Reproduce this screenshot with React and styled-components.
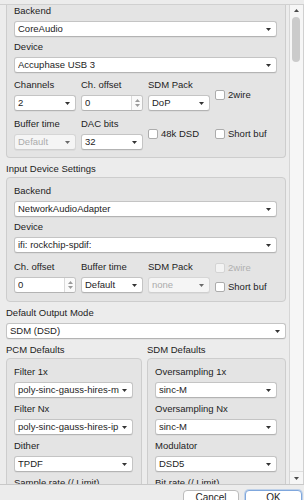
import React from 'react'
import styled, { createGlobalStyle } from 'styled-components'

const GlobalStyle = createGlobalStyle`
  html, body {
    margin: 0;
    padding: 0;
  }
  body {
    background: #ececec;
    font-family: "Liberation Sans", Arial, sans-serif;
    font-size: 9.5px;
    color: #1d1d1d;
    overflow: hidden;
  }
`

function Caret({ muted }) {
  return (
    <svg width="5" height="3" viewBox="0 0 5 3">
      <path d="M0 0h5L2.5 3z" fill={muted ? '#6a6a6a' : '#333'} />
    </svg>
  )
}

function Combo({ value, disabled }) {
  return (
    <ComboBox $disabled={disabled}>
      <ComboText>{value}</ComboText>
      <Caret muted={disabled} />
    </ComboBox>
  )
}

function Spin({ value }) {
  return (
    <SpinBox>
      <ComboText>{value}</ComboText>
      <Stepper>
        <svg width="5" height="3" viewBox="0 0 5 3">
          <path d="M0 3h5L2.5 0z" fill="#9a9a9a" />
        </svg>
        <svg width="5" height="3" viewBox="0 0 5 3">
          <path d="M0 0h5L2.5 3z" fill="#9a9a9a" />
        </svg>
      </Stepper>
    </SpinBox>
  )
}

function Check({ label, disabled }) {
  return (
    <CheckRow $disabled={disabled}>
      <Box $disabled={disabled} />
      <span>{label}</span>
    </CheckRow>
  )
}

function Field({ label, children }) {
  return (
    <FieldCol>
      <Label>{label}</Label>
      {children}
    </FieldCol>
  )
}

export default function App() {
  return (
    <>
      <GlobalStyle />
      <Window>
        <ScrollArea>
          <Viewport>
            <Group $cut>
              <Field label="Backend">
                <Combo value="CoreAudio" />
              </Field>
              <Field label="Device">
                <Combo value="Accuphase USB 3" />
              </Field>
              <FieldGrid $top={2}>
                <Field label="Channels">
                  <Combo value="2" />
                </Field>
                <Field label="Ch. offset">
                  <Spin value="0" />
                </Field>
                <Field label="SDM Pack">
                  <Combo value="DoP" />
                </Field>
                <Check label="2wire" />
                <Field label="Buffer time">
                  <Combo value="Default" disabled />
                </Field>
                <Field label="DAC bits">
                  <Combo value="32" />
                </Field>
                <Check label="48k DSD" />
                <Check label="Short buf" />
              </FieldGrid>
            </Group>

            <Section>
              <Label>Input Device Settings</Label>
              <Group>
                <Field label="Backend">
                  <Combo value="NetworkAudioAdapter" />
                </Field>
                <Field label="Device">
                  <Combo value="ifi: rockchip-spdif:" />
                </Field>
                <FieldGrid $top={4}>
                  <Field label="Ch. offset">
                    <Spin value="0" />
                  </Field>
                  <Field label="Buffer time">
                    <Combo value="Default" />
                  </Field>
                  <Field label="SDM Pack">
                    <Combo value="none" disabled />
                  </Field>
                  <CheckStack>
                    <Check label="2wire" disabled />
                    <Check label="Short buf" />
                  </CheckStack>
                </FieldGrid>
              </Group>
            </Section>

            <Field label="Default Output Mode">
              <Combo value="SDM (DSD)" />
            </Field>

            <Columns>
              <Section>
                <Label>PCM Defaults</Label>
                <Group $gap={5}>
                  <Field label="Filter 1x">
                    <Combo value="poly-sinc-gauss-hires-mp" />
                  </Field>
                  <Field label="Filter Nx">
                    <Combo value="poly-sinc-gauss-hires-ip" />
                  </Field>
                  <Field label="Dither">
                    <Combo value="TPDF" />
                  </Field>
                  <Field label="Sample rate (/ Limit)">
                    <Combo value="Auto" />
                  </Field>
                </Group>
              </Section>
              <Section>
                <Label>SDM Defaults</Label>
                <Group $gap={5}>
                  <Field label="Oversampling 1x">
                    <Combo value="sinc-M" />
                  </Field>
                  <Field label="Oversampling Nx">
                    <Combo value="sinc-M" />
                  </Field>
                  <Field label="Modulator">
                    <Combo value="DSD5" />
                  </Field>
                  <Field label="Bit rate (/ Limit)">
                    <Combo value="DSD256" />
                  </Field>
                </Group>
              </Section>
            </Columns>
          </Viewport>

          <ScrollBar>
            <ArrowButton>
              <svg width="5" height="3" viewBox="0 0 5 3">
                <path d="M0 3h5L2.5 0z" fill="#4a4a4a" />
              </svg>
            </ArrowButton>
            <Track>
              <Thumb />
            </Track>
            <ArrowButton $bottom>
              <svg width="5" height="3" viewBox="0 0 5 3">
                <path d="M0 0h5L2.5 3z" fill="#4a4a4a" />
              </svg>
            </ArrowButton>
          </ScrollBar>
        </ScrollArea>

        <ButtonBar>
          <Button>Cancel</Button>
          <Button $default>OK</Button>
        </ButtonBar>
      </Window>
    </>
  )
}

const Window = styled.div`
  width: 304px;
  height: 500px;
  box-sizing: border-box;
  padding-top: 4px;
  display: flex;
  flex-direction: column;
  overflow: hidden;
`

const ScrollArea = styled.div`
  height: 481px;
  flex: none;
  box-sizing: border-box;
  display: flex;
  border-top: 1px solid #d0d0d0;
  border-bottom: 1px solid #c8c8c8;
`

const Viewport = styled.div`
  width: 289px;
  flex: none;
  box-sizing: border-box;
  padding: 0 3px 0 6px;
  display: flex;
  flex-direction: column;
  gap: 5px;
  overflow: hidden;
`

const Section = styled.div`
  display: flex;
  flex-direction: column;
  gap: 2px;
`

const Group = styled.div`
  display: flex;
  flex-direction: column;
  gap: ${p => p.$gap || 4}px;
  padding: ${p => (p.$cut ? '0 8px 7px 7px' : '7px 8px 8px 7px')};
  background: #e4e4e4;
  border: 1px solid #cdcdcd;
  border-top: ${p => (p.$cut ? 'none' : '1px solid #cdcdcd')};
  border-radius: ${p => (p.$cut ? '0 0 4px 4px' : '4px')};
`

const Columns = styled.div`
  display: grid;
  grid-template-columns: 136px 139px;
  column-gap: 5px;
  align-items: start;
`

const FieldCol = styled.div`
  display: flex;
  flex-direction: column;
  gap: 4px;
  min-width: 0;
`

const Label = styled.div`
  line-height: 12px;
  white-space: nowrap;
`

const FieldGrid = styled.div`
  display: grid;
  grid-template-columns: repeat(4, 62px);
  column-gap: 5px;
  row-gap: 7px;
  align-items: center;
  margin-top: ${p => p.$top || 0}px;
`

const ComboBox = styled.div`
  height: 16px;
  box-sizing: border-box;
  display: flex;
  align-items: center;
  gap: 3px;
  padding: 0 5px 0 3px;
  background: ${p => (p.$disabled ? '#f5f5f5' : '#fff')};
  border: 1px solid ${p => (p.$disabled ? '#d6d6d6' : '#c4c4c4')};
  border-bottom-color: ${p => (p.$disabled ? '#cfcfcf' : '#b3b3b3')};
  border-radius: 3px;
  box-shadow: 0 1px 0 rgba(0, 0, 0, 0.04);
  color: ${p => (p.$disabled ? '#ababab' : '#1d1d1d')};
`

const ComboText = styled.span`
  flex: 1;
  min-width: 0;
  overflow: hidden;
  white-space: nowrap;
  line-height: 14px;
`

const SpinBox = styled.div`
  height: 16px;
  box-sizing: border-box;
  display: flex;
  align-items: stretch;
  padding-left: 3px;
  background: #fff;
  border: 1px solid #c4c4c4;
  border-bottom-color: #b3b3b3;
  border-radius: 3px;

  ${ComboText} {
    align-self: center;
  }
`

const Stepper = styled.div`
  width: 10px;
  display: flex;
  flex-direction: column;
  align-items: center;
  justify-content: center;
  gap: 2px;
  border-left: 1px solid #dadada;
  background: #fafafa;
  border-radius: 0 2px 2px 0;
`

const CheckRow = styled.label`
  display: flex;
  align-items: center;
  gap: 3px;
  line-height: 12px;
  white-space: nowrap;
  color: ${p => (p.$disabled ? '#b0b0b0' : '#1d1d1d')};
`

const Box = styled.span`
  width: 10px;
  height: 10px;
  box-sizing: border-box;
  flex: none;
  background: ${p => (p.$disabled ? '#f3f3f3' : '#fff')};
  border: 1px solid ${p => (p.$disabled ? '#d4d4d4' : '#acacac')};
  border-radius: 2px;
`

const CheckStack = styled.div`
  display: flex;
  flex-direction: column;
  gap: 7px;
`

const ScrollBar = styled.div`
  flex: 1;
  display: flex;
  flex-direction: column;
  background: #f6f6f6;
  border-left: 1px solid #d6d6d6;
  border-right: 1px solid #d0d0d0;
`

const ArrowButton = styled.div`
  height: ${p => (p.$bottom ? 12 : 10)}px;
  flex: none;
  display: flex;
  align-items: center;
  justify-content: center;
  border-top: ${p => (p.$bottom ? '1px solid #dedede' : 'none')};
`

const Track = styled.div`
  flex: 1;
  padding: 2px 0 0 2px;
`

const Thumb = styled.div`
  width: 8px;
  height: 45px;
  background: #cbcbcb;
  border-radius: 4px;
`

const ButtonBar = styled.div`
  flex: 1;
  display: flex;
  justify-content: flex-end;
  align-items: flex-start;
  gap: 6px;
  padding: 5px 2px 0 0;
`

const Button = styled.div`
  width: ${p => (p.$default ? 57 : 56)}px;
  height: 21px;
  box-sizing: border-box;
  padding-top: 1px;
  text-align: center;
  line-height: 12px;
  font-size: 10px;
  background: #fff;
  border: 1px solid ${p => (p.$default ? '#7fa7dd' : '#bcbcbc')};
  border-radius: 4px;
  box-shadow: ${p => (p.$default ? '0 0 0 1px rgba(110, 160, 225, 0.35)' : '0 1px 0 rgba(0,0,0,0.05)')};
`
